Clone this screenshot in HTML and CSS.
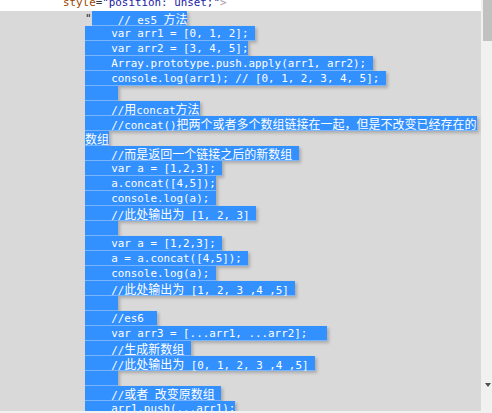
FILE: index.html
```html
<!DOCTYPE html>
<html>
<head>
<meta charset="utf-8">
<link rel="stylesheet" href="styles.css">
</head>
<body>
<div class="app">
  <div class="main">
    <div class="attr-line"><span class="line-text"><span class="an">style</span><span class="eq">=</span><span class="av">"position: unset;"</span><span class="tg">&gt;</span></span></div>
    <div class="code">
      <div class="row"><span class="quote">"</span><span class="sel">    // es5 <span class="zh">方法</span></span></div>
      <div class="row"><span class="sel">    var arr1 = [0, 1, 2]; </span></div>
      <div class="row"><span class="sel">    var arr2 = [3, 4, 5];</span></div>
      <div class="row"><span class="sel">    Array.prototype.push.apply(arr1, arr2); </span></div>
      <div class="row"><span class="sel">    console.log(arr1); // [0, 1, 2, 3, 4, 5]; </span></div>
      <div class="row"><span class="sel">     </span></div>
      <div class="row"><span class="sel">    //<span class="zh">用</span>concat<span class="zh">方法</span></span></div>
      <div class="row"><span class="sel">    //concat()<span class="zh">把两个或者多个数组链接在一起，但是不改变已经存在的</span></span></div>
      <div class="row"><span class="sel"><span class="zh">数组</span></span></div>
      <div class="row"><span class="sel">    //<span class="zh">而是返回一个链接之后的新数组</span> </span></div>
      <div class="row"><span class="sel">    var a = [1,2,3]; </span></div>
      <div class="row"><span class="sel">    a.concat([4,5]);</span></div>
      <div class="row"><span class="sel">    console.log(a); </span></div>
      <div class="row"><span class="sel">    //<span class="zh">此处输出为</span> [1, 2, 3] </span></div>
      <div class="row"><span class="sel">     </span></div>
      <div class="row"><span class="sel">    var a = [1,2,3]; </span></div>
      <div class="row"><span class="sel">    a = a.concat([4,5]); </span></div>
      <div class="row"><span class="sel">    console.log(a); </span></div>
      <div class="row"><span class="sel">    //<span class="zh">此处输出为</span> [1, 2, 3 ,4 ,5] </span></div>
      <div class="row"><span class="sel">     </span></div>
      <div class="row"><span class="sel">    //es6  </span></div>
      <div class="row"><span class="sel">    var arr3 = [...arr1, ...arr2];   </span></div>
      <div class="row"><span class="sel">    //<span class="zh">生成新数组</span> </span></div>
      <div class="row"><span class="sel">    //<span class="zh">此处输出为</span> [0, 1, 2, 3 ,4 ,5] </span></div>
      <div class="row"><span class="sel">     </span></div>
      <div class="row"><span class="sel">    //<span class="zh">或者</span> <span class="zh">改变原数组</span> </span></div>
      <div class="row"><span class="sel">    arr1.push(...arr1);</span></div>
    </div>
    <div class="hbar"></div>
  </div>
  <div class="vbar">
    <div class="thumb"></div>
    <div class="arrow"></div>
  </div>
</div>
</body>
</html>
```
FILE: styles.css
```css
html, body {
  margin: 0;
  padding: 0;
  background: #ffffff;
}
body {
  width: 492px;
  height: 413px;
  overflow: hidden;
}
.app {
  display: flex;
  height: 413px;
}
.main {
  flex: 1;
  display: flex;
  flex-direction: column;
  min-width: 0;
}
.attr-line {
  height: 11px;
  flex: none;
  overflow: hidden;
  background: #ffffff;
  font-family: "DejaVu Sans Mono", "Liberation Mono", monospace;
  font-size: 10.86px;
  white-space: pre;
}
.line-text {
  display: block;
  margin-top: -5px;
  padding-left: 63px;
  line-height: 15px;
}
.an { color: #994500; }
.eq { color: #303942; }
.av { color: #1a1aa6; }
.tg { color: #a894a6; }

.code {
  flex: 1;
  min-height: 0;
  background: #d9d9d9;
  overflow: hidden;
  padding-left: 85px;
  font-family: "DejaVu Sans Mono", "Liberation Mono", monospace;
  font-size: 10.86px;
  line-height: 15px;
}
.row {
  height: 15px;
  display: flex;
  white-space: pre;
}
.quote {
  color: #222222;
  display: inline-block;
  height: 15px;
}
.sel {
  display: inline-block;
  height: 15px;
  line-height: 15px;
  background: #3390ff;
  color: #ffffff;
  box-shadow: inset 0 -1px 0 rgba(255, 255, 255, 0.35), 2px 2px 3px rgba(0, 0, 0, 0.22);
}
.zh {
  font-family: "Noto Sans CJK SC", sans-serif;
  font-size: 12px;
  line-height: 15px;
}
.hbar {
  height: 2px;
  flex: none;
  background: #f1f1f1;
}
.vbar {
  width: 11px;
  flex: none;
  background: #f1f1f1;
  display: flex;
  flex-direction: column;
  align-items: flex-end;
}
.thumb {
  width: 9px;
  height: 41px;
  background: #c1c1c1;
}
.arrow {
  margin-top: auto;
  margin-bottom: 26px;
  margin-right: 1px;
  width: 0;
  height: 0;
  border-left: 3px solid transparent;
  border-right: 3px solid transparent;
  border-top: 4px solid #505050;
}
```
